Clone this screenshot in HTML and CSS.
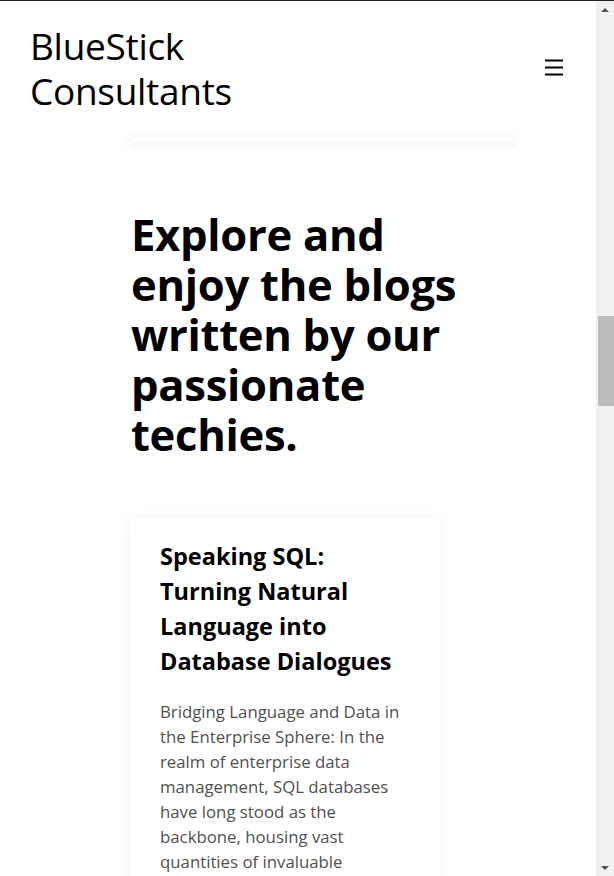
FILE: index.html
```html
<!DOCTYPE html>
<html lang="en">
<head>
<meta charset="utf-8">
<title>BlueStick Consultants - Blogs</title>
<link rel="stylesheet" href="styles.css">
</head>
<body>
<div class="page">
  <header class="site-header">
    <a class="brand" href="#"><span class="brand-line">BlueStick</span><span class="brand-line">Consultants</span></a>
    <button class="menu-btn" aria-label="Menu">
      <svg width="20" height="18" viewBox="0 0 20 18"><path d="M1 2.5h18M1 9.5h18M1 16.5h18" stroke="#000" stroke-width="2" fill="none"/></svg>
    </button>
  </header>
  <div class="prev-shadow"></div>
  <main class="content">
    <h1 class="hero">Explore and enjoy the blogs written by our passionate techies.</h1>
    <article class="card">
      <h2 class="card-title">Speaking SQL: Turning Natural Language into Database Dialogues</h2>
      <p class="card-text">Bridging Language and Data in the Enterprise Sphere: In the realm of enterprise data management, SQL databases have long stood as the backbone, housing vast quantities of invaluable information that drive decisions across the organisation.</p>
    </article>
  </main>
</div>
<div class="scrollbar">
  <div class="sb-arrow up"></div>
  <div class="sb-track">
    <div class="sb-thumb"></div>
  </div>
  <div class="sb-arrow down"></div>
</div>
</body>
</html>
```
FILE: styles.css
```css
* { box-sizing: border-box; }
html, body { margin: 0; padding: 0; }
body {
  display: flex;
  height: 876px;
  overflow: hidden;
  border-top: 1px solid #202124;
  background: #fff;
  font-family: "Open Sans", "Noto Sans", sans-serif;
  color: #000;
}
.page {
  flex: 1;
  min-width: 0;
  overflow: hidden;
}
.site-header {
  display: flex;
  align-items: center;
  justify-content: space-between;
  padding: 22px 32px 0 30px;
}
.brand {
  display: flex;
  flex-direction: column;
  font-size: 37px;
  color: #000;
  text-decoration: none;
  letter-spacing: -0.3px;
}
.brand-line {
  display: block;
  height: 45px;
  line-height: 45px;
}
.menu-btn {
  background: none;
  border: 0;
  padding: 0;
  margin-top: -2px;
  display: flex;
}
.prev-shadow {
  margin: 25px 0 0 132px;
  width: 380px;
  height: 3px;
  box-shadow: 0 2px 12px 3px rgba(0,0,0,0.06);
}
.content {
  padding: 68px 0 0 130px;
}
.hero {
  width: 340px;
  margin: 0 0 0 1px;
  font-size: 43.6px;
  line-height: 50px;
  font-weight: 700;
  letter-spacing: -0.3px;
}
.card {
  width: 310px;
  margin-top: 60px;
  padding: 20px 30px 0 30px;
  background: #fff;
  box-shadow: 0 0 14px rgba(0,0,0,0.06);
  height: 400px;
}
.card-title {
  margin: 0 0 20px;
  font-size: 23.5px;
  line-height: 35px;
  font-weight: 700;
}
.card-text {
  margin: 0;
  font-size: 16.8px;
  line-height: 25px;
  color: #505050;
}
.scrollbar {
  width: 18px;
  flex: none;
  background: #f1f1f1;
  display: flex;
  flex-direction: column;
  align-items: center;
}
.sb-arrow {
  height: 17px;
  width: 17px;
  display: flex;
  align-items: center;
  justify-content: center;
}
.sb-arrow::before {
  content: "";
  border-left: 4px solid transparent;
  border-right: 4px solid transparent;
}
.sb-arrow.up::before { border-bottom: 4px solid #505050; }
.sb-arrow.down::before { border-top: 4px solid #505050; }
.sb-track {
  flex: 1;
  width: 100%;
  padding: 298px 0 0 2px;
}
.sb-thumb {
  width: 16px;
  height: 90px;
  background: #bcbcbc;
}
```
